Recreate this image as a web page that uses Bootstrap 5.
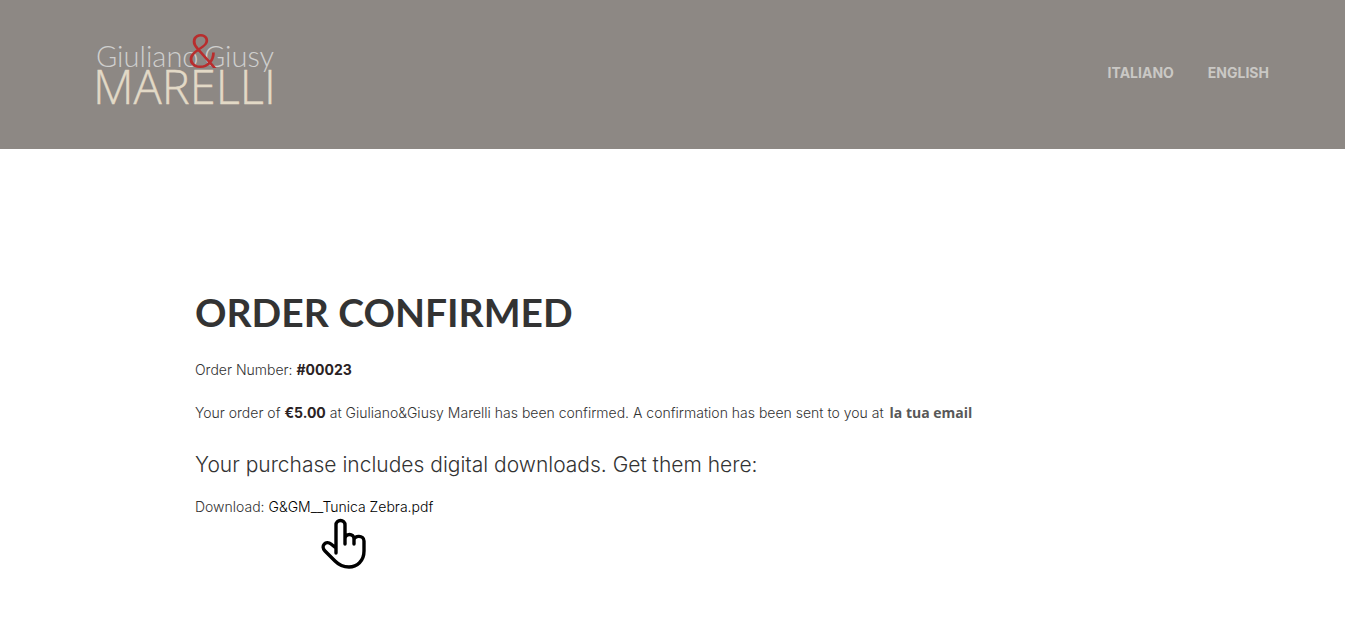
<!DOCTYPE html>
<html lang="en">
<head>
<meta charset="utf-8">
<meta name="viewport" content="width=device-width, initial-scale=1">
<title>Order confirmed</title>
<link href="https://cdn.jsdelivr.net/npm/bootstrap@5.3.0/dist/css/bootstrap.min.css" rel="stylesheet">
<style>
body { font-family: "Inter", "Liberation Sans", sans-serif; font-size: 14px; line-height: 24px; font-weight: 300; color: #333; background: #fff; }
.site-header { background: #8d8884; padding: 28px 76px 36px 92px; }
.brand-logo { display: block; width: 192px; height: 85px; overflow: visible; }
.lang-nav { gap: 34px; padding-top: 4px; }
.lang-nav a { color: #cac8c5; font-size: 14px; line-height: 20px; font-weight: 700; text-decoration: none; }
.order-page { max-width: 955px; padding: 136px 0 48px; }
.order-title { font-family: "Lato", sans-serif; font-size: 39px; line-height: 54px; font-weight: 700; color: #333; margin-bottom: 19px; }
.order-page p { margin-bottom: 19px; }
.order-page strong { font-weight: 700; color: #2a2223; }
.order-page .mail-label { font-family: "Open Sans", sans-serif; color: #585858; margin-left: 2px; }
.downloads-title { font-size: 21px; line-height: 32px; font-weight: 300; margin: 24px 0 14px; }
.file-link { color: #000; text-decoration: none; position: relative; }
.hand-pointer { position: absolute; left: 53px; top: 20px; width: 45px; height: 52px; }
</style>
</head>
<body>
<header class="site-header d-flex justify-content-between align-items-center">
  <a href="#" aria-label="Giuliano &amp; Giusy Marelli">
    <svg class="brand-logo" viewBox="0 0 192 85">
      <g font-family="Lato, sans-serif" font-weight="300" font-size="29" fill="#cfcfce">
        <text x="4" y="39">Giuliano</text>
        <text x="112" y="39">Giusy</text>
      </g>
      <text x="1" y="76" font-family="Open Sans, sans-serif" font-weight="300" font-size="47" fill="#e2d9c6" stroke="#e2d9c6" stroke-width=".4">MARELLI</text>
      <text x="95" y="40" font-family="Roboto, sans-serif" font-weight="300" font-size="49" fill="#b82d2d">&amp;</text>
    </svg>
  </a>
  <nav class="lang-nav d-flex" aria-label="Language">
    <a href="#it">ITALIANO</a>
    <a href="#en">ENGLISH</a>
  </nav>
</header>
<main class="order-page container-fluid">
  <h1 class="order-title">ORDER CONFIRMED</h1>
  <p>Order Number: <strong>#00023</strong></p>
  <p>Your order of <strong>€5.00</strong> at Giuliano&amp;Giusy Marelli has been confirmed. A confirmation has been sent to you at <strong class="mail-label">la tua email</strong></p>
  <h2 class="downloads-title">Your purchase includes digital downloads. Get them here:</h2>
  <p>Download: <a class="file-link" href="#download">G&amp;GM__Tunica Zebra.pdf<svg class="hand-pointer" viewBox="0 0 45 52" fill="none" stroke="#000" stroke-width="3.4" stroke-linecap="round" stroke-linejoin="round" aria-hidden="true"><path d="M15 35V7a4.500 4.500 0 0 1 9 0v19M24 21c0-6 9-6 9 0v5M33 22c0-5 10-5 10 1v10c0 10-7 16-15 16-6 0-10-2-14-6L4 33c-5-5 1-11 6-7l5 4"/></svg></a></p>
</main>
<script src="https://cdn.jsdelivr.net/npm/bootstrap@5.3.0/dist/js/bootstrap.bundle.min.js"></script>
</body>
</html>
